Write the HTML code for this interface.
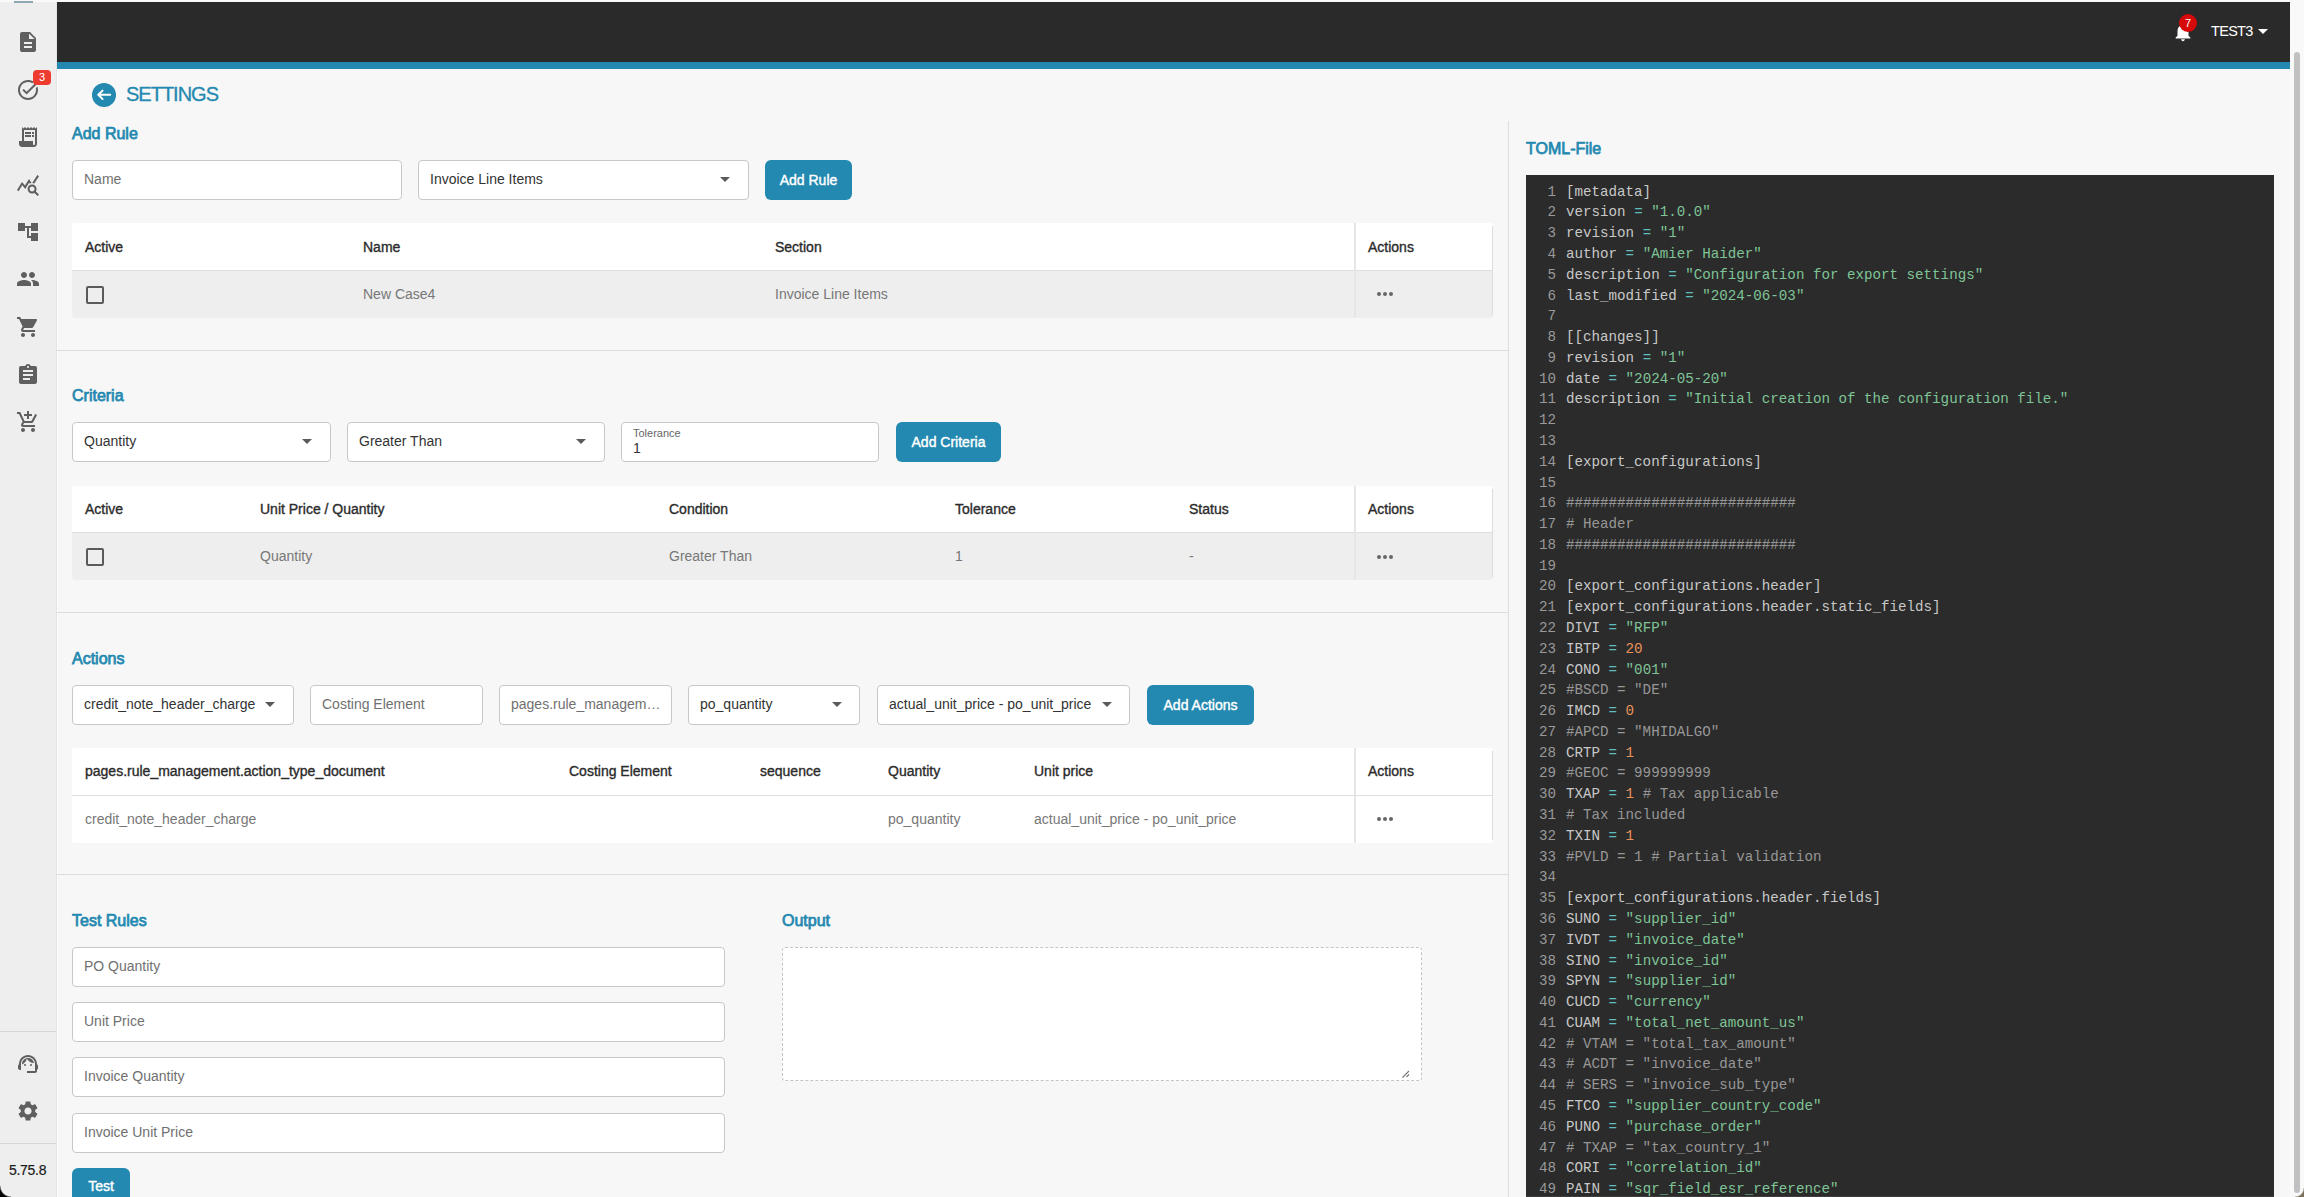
<!DOCTYPE html>
<html><head><meta charset="utf-8">
<style>
html,body{margin:0;padding:0}
body{width:2304px;height:1197px;overflow:hidden;position:relative;background:#f7f7f7;font-family:"Liberation Sans",sans-serif;font-size:14px;color:#333}
.a{position:absolute}
#sb{position:absolute;left:0;top:2px;width:56px;height:1195px;background:#eeeeee;border-right:1px solid #e4e4e4}
#sb svg{position:absolute;width:24px;height:24px;fill:#5f5f5f}
#hdr{position:absolute;left:57px;top:2px;width:2233px;height:60px;background:#2a2a2a}
#stripe{position:absolute;left:57px;top:62px;width:2233px;height:7px;background:#2389b0}
.ttl{position:absolute;font-size:16px;color:#2389b0;line-height:20px;white-space:nowrap;-webkit-text-stroke:0.75px #2389b0}
.inp{position:absolute;box-sizing:border-box;height:40px;background:#fff;border:1px solid #c8c8c8;border-radius:4px;line-height:37px;padding-left:11px;color:#333;white-space:nowrap;overflow:hidden}
.ph{color:#707070}
.car{position:absolute;width:0;height:0;border-left:5px solid transparent;border-right:5px solid transparent;border-top:5px solid #5a5a5a;top:16px}
.btn{position:absolute;box-sizing:border-box;height:40px;background:#2389b0;border-radius:6px;color:#fff;font-size:14px;-webkit-text-stroke:0.4px #fff;line-height:40px;text-align:center;white-space:nowrap}
.tbl{position:absolute;left:72px;width:1421px;background:#fff;border-radius:3px;overflow:hidden}
.th{position:absolute;top:0;font-size:14px;color:#2b2b2b;white-space:nowrap;-webkit-text-stroke:0.35px #2b2b2b}
.tr{position:absolute;left:0;width:100%;background:#eeeeee;border-top:1px solid #dedede}
.td{position:absolute;color:#777;white-space:nowrap}
.vd{position:absolute;left:1282px;top:0;width:2px;height:100%;background:#e6e6e6}
.rb{position:absolute;right:0;top:3px;width:1px;bottom:3px;background:#dcdcdc}
.cb{position:absolute;left:14px;box-sizing:border-box;width:18px;height:18px;border:2px solid #5a5a5a;border-radius:2px}
.dots{position:absolute;left:1304px;width:17px;height:5px}
.dots i{position:absolute;top:0.5px;width:4px;height:4px;border-radius:50%;background:#666}
.hl{position:absolute;left:57px;width:1451px;height:1px;background:#dddddd}
#code{position:absolute;left:1526px;top:175px;width:748px;height:1022px;background:#2b2b2b;overflow:hidden}
#ln,#src{position:absolute;margin:0;font-family:"Liberation Mono",monospace;font-size:14.2px;line-height:20.78px;white-space:pre}
#ln{left:0;width:30px;top:6.6px;text-align:right;color:#999}
#src{left:40px;top:6.6px;color:#c8c8c8}
#src .c{color:#979797}#src .s{color:#7fc497}#src .n{color:#e8925a}#src .o{color:#5fbdbd}
</style></head><body>

<div class="a" style="left:0;top:0;width:2304px;height:2px;background:#f9f9f9"></div>

<!-- SIDEBAR -->
<div id="sb">
<div class="a" style="left:14px;top:-1px;width:19px;height:2px;background:#8fa9b3"></div>
<svg style="left:16px;top:28px" viewBox="0 0 24 24"><path d="M14 2H6c-1.1 0-1.99.9-1.99 2L4 20c0 1.1.89 2 1.99 2H18c1.1 0 2-.9 2-2V8l-6-6zm2 16H8v-2h8v2zm0-4H8v-2h8v2zm-3-5V3.5L18.5 9H13z"/></svg>
<svg style="left:16px;top:76px" viewBox="0 0 24 24"><path d="M22,5.18L10.59,16.6l-4.24-4.24l1.41-1.41l2.83,2.83l10-10L22,5.18z M19.79,10.22C19.92,10.8,20,11.39,20,12c0,4.42-3.58,8-8,8s-8-3.58-8-8c0-4.42,3.58-8,8-8c1.58,0,3.04,0.46,4.28,1.25l1.44-1.44C16.1,2.67,14.13,2,12,2C6.48,2,2,6.48,2,12c0,5.52,4.48,10,10,10s10-4.48,10-10c0-1.19-0.22-2.33-0.6-3.39L19.79,10.22z"/></svg>
<div class="a" style="left:33px;top:68px;width:18px;height:15px;border-radius:4px;background:#ee3b30;color:#fff;font-size:11px;line-height:15px;text-align:center">3</div>
<svg style="left:16px;top:123px" viewBox="0 0 24 24"><path d="M19.5 3.5L18 2l-1.5 1.5L15 2l-1.5 1.5L12 2l-1.5 1.5L9 2 7.5 3.5 6 2v14H3v3c0 1.66 1.34 3 3 3h12c1.66 0 3-1.34 3-3V2l-1.5 1.5zM19 19c0 .55-.45 1-1 1s-1-.45-1-1v-3H8V5h11v14z"/><path d="M9 7h6v2H9zm7 0h2v2h-2zm-7 3h6v2H9zm7 0h2v2h-2z"/></svg>
<svg style="left:16px;top:171px" viewBox="0 0 24 24"><path d="M19.88,18.47c0.44-0.7,0.7-1.51,0.7-2.39c0-2.49-2.01-4.5-4.5-4.5s-4.5,2.01-4.5,4.5s2.01,4.5,4.49,4.5c0.88,0,1.7-0.26,2.39-0.7L21.58,23L23,21.58L19.88,18.47z M16.08,18.58c-1.38,0-2.5-1.12-2.5-2.5c0-1.38,1.12-2.5,2.5-2.5s2.5,1.12,2.5,2.5C18.58,17.46,17.46,18.58,16.08,18.58z M15.72,10.08c-0.74,0.02-1.45,0.18-2.1,0.45l-0.55-0.83l-3.8,6.18l-3.01-3.52l-3.63,5.81L1,17l5-8l3,3.5L13,6C13,6,15.72,10.08,15.72,10.08z M18.31,10.58c-0.64-0.28-1.33-0.45-2.05-0.49c0,0,5.12-8.09,5.12-8.09L23,3.18L18.31,10.58z"/></svg>
<svg style="left:16px;top:218px" viewBox="0 0 24 24"><path d="M22 11V3h-7v3H9V3H2v8h7V8h2v10h4v3h7v-8h-7v3h-2V8h2v3z"/></svg>
<svg style="left:16px;top:265px" viewBox="0 0 24 24"><path d="M16 11c1.66 0 2.99-1.34 2.99-3S17.66 5 16 5c-1.66 0-3 1.34-3 3s1.34 3 3 3zm-8 0c1.66 0 2.99-1.34 2.99-3S9.66 5 8 5C6.34 5 5 6.34 5 8s1.34 3 3 3zm0 2c-2.33 0-7 1.17-7 3.5V19h14v-2.5c0-2.33-4.67-3.5-7-3.5zm8 0c-.29 0-.62.02-.97.05 1.16.84 1.97 1.97 1.97 3.45V19h6v-2.5c0-2.33-4.67-3.5-7-3.5z"/></svg>
<svg style="left:16px;top:313px" viewBox="0 0 24 24"><path d="M7 18c-1.1 0-1.99.9-1.99 2S5.9 22 7 22s2-.9 2-2-.9-2-2-2zM1 2v2h2l3.6 7.59-1.35 2.45c-.16.28-.25.61-.25.96 0 1.1.9 2 2 2h12v-2H7.42c-.14 0-.25-.11-.25-.25l.03-.12.9-1.63h7.45c.75 0 1.41-.41 1.75-1.03l3.58-6.49c.08-.14.12-.31.12-.48 0-.55-.45-1-1-1H5.21l-.94-2H1zm16 16c-1.1 0-1.99.9-1.99 2s.89 2 1.99 2 2-.9 2-2-.9-2-2-2z"/></svg>
<svg style="left:16px;top:361px" viewBox="0 0 24 24"><path d="M19 3h-4.18C14.4 1.84 13.3 1 12 1c-1.3 0-2.4.84-2.82 2H5c-1.1 0-2 .9-2 2v14c0 1.1.9 2 2 2h14c1.1 0 2-.9 2-2V5c0-1.1-.9-2-2-2zm-7 0c.55 0 1 .45 1 1s-.45 1-1 1-1-.45-1-1 .45-1 1-1zm2 14H7v-2h7v2zm3-4H7v-2h10v2zm0-4H7V7h10v2z"/></svg>
<svg style="left:16px;top:408px" viewBox="0 0 24 24"><path d="M11 9h2V6h3V4h-3V1h-2v3H8v2h3v3zm-4 9c-1.1 0-1.99.9-1.99 2S5.9 22 7 22s2-.9 2-2-.9-2-2-2zm10 0c-1.1 0-1.99.9-1.99 2s.89 2 1.99 2 2-.9 2-2-.9-2-2-2zm-9.83-3.25l.03-.12.9-1.63h7.45c.75 0 1.41-.41 1.75-1.03L21 4.96 19.25 4h-.01l-1.1 2-2.76 5H8.53l-.13-.27L6.16 6l-.95-2-.94-2H1v2h2l3.6 7.59-1.35 2.45c-.16.28-.25.61-.25.96 0 1.1.9 2 2 2h12v-2H7.42c-.13 0-.25-.11-.25-.25z"/></svg>
<div class="a" style="left:0;top:1029px;width:56px;height:1px;background:#d6d6d6"></div>
<svg style="left:16px;top:1050px" viewBox="0 0 24 24"><path d="M21 12.22C21 6.73 16.74 3 12 3c-4.69 0-9 3.65-9 9.28-.6.34-1 .98-1 1.72v2c0 1.1.9 2 2 2h1v-6.1c0-3.87 3.13-7 7-7s7 3.13 7 7V19h-8v2h8c1.1 0 2-.9 2-2v-1.22c.59-.31 1-.92 1-1.64v-2.3c0-.7-.41-1.31-1-1.62z"/><circle cx="9" cy="13" r="1"/><circle cx="15" cy="13" r="1"/><path d="M18 11.03C17.52 8.18 15.04 6 12.05 6c-3.03 0-6.29 2.51-6.03 6.45 2.47-1.01 4.33-3.21 4.86-5.89 1.31 2.63 4 4.44 7.12 4.47z"/></svg>
<svg style="left:16px;top:1097px" viewBox="0 0 24 24"><path d="M19.14 12.94c.04-.3.06-.61.06-.94 0-.32-.02-.64-.07-.94l2.03-1.58c.18-.14.23-.41.12-.61l-1.92-3.32c-.12-.22-.37-.29-.59-.22l-2.39.96c-.5-.38-1.03-.7-1.62-.94l-.36-2.54c-.04-.24-.24-.41-.48-.41h-3.84c-.24 0-.43.17-.47.41l-.36 2.54c-.59.24-1.130.57-1.62.94l-2.39-.96c-.22-.08-.47 0-.59.22L2.74 8.870c-.12.21-.08.47.12.61l2.03 1.58c-.05.3-.09.63-.09.94s.02.64.07.94l-2.03 1.58c-.18.14-.23.41-.12.61l1.92 3.32c.12.22.37.29.59.22l2.39-.96c.5.38 1.03.7 1.62.94l.36 2.54c.05.24.24.41.48.41h3.84c.24 0 .44-.17.47-.41l.36-2.54c.59-.24 1.13-.56 1.62-.94l2.39.96c.22.08.47 0 .59-.22l1.92-3.32c.12-.22.07-.47-.12-.61l-2.010-1.58zM12 15.6c-1.98 0-3.6-1.62-3.6-3.6s1.62-3.6 3.6-3.6 3.6 1.62 3.6 3.6-1.62 3.6-3.6 3.6z"/></svg>
<div class="a" style="left:0;top:1141px;width:56px;height:1px;background:#d6d6d6"></div>
<div class="a" style="left:9px;top:1158.5px;font-size:14px;line-height:18px;color:#1a1a1a;letter-spacing:-0.3px;-webkit-text-stroke:0.2px #1a1a1a">5.75.8</div>
</div>

<!-- HEADER -->
<div class="a" style="left:57px;top:69px;width:1px;height:1128px;background:#fcfcfc"></div>
<div id="hdr">
<svg class="a" style="left:2115px;top:18.5px" width="22" height="22" viewBox="0 0 24 24"><path fill="#fff" d="M12 22c1.1 0 2-.9 2-2h-4c0 1.1.89 2 2 2zm6-6v-5c0-3.07-1.640-5.64-4.5-6.32V4c0-.83-.67-1.5-1.5-1.5s-1.5.67-1.5 1.5v.68C7.63 5.36 6 7.92 6 11v5l-2 2v1h16v-1l-2-2z"/></svg>
<div class="a" style="left:2122px;top:12px;width:18px;height:18px;border-radius:50%;background:#d60a0a;color:#fff;font-size:11px;line-height:18px;text-align:center">7</div>
<div class="a" style="left:2154px;top:19.9px;font-size:14.5px;line-height:18px;color:#fff;white-space:nowrap;letter-spacing:-0.7px">TEST3</div>
<div class="a" style="left:2201px;top:27px;width:0;height:0;border-left:5px solid transparent;border-right:5px solid transparent;border-top:5px solid #fff"></div>
</div>
<div id="stripe"></div>

<!-- MAIN -->

<!-- back + title -->
<svg class="a" style="left:92px;top:82.5px" width="24" height="24" viewBox="0 0 24 24"><circle cx="12" cy="12" r="12" fill="#2389b0"/><path d="M18.3 11.8H6.2M10.6 7.6L6.2 11.8L10.6 16" stroke="#fff" stroke-width="1.9" stroke-linecap="round" stroke-linejoin="round" fill="none"/></svg>
<div class="a" style="left:126px;top:82px;font-size:20px;line-height:24px;color:#2389b0;letter-spacing:-1px;white-space:nowrap;-webkit-text-stroke:0.3px #2389b0">SETTINGS</div>

<!-- ADD RULE -->
<div class="ttl" style="left:72px;top:123.5px">Add Rule</div>
<div class="inp ph" style="left:72px;top:160px;width:330px">Name</div>
<div class="inp" style="left:418px;top:160px;width:331px">Invoice Line Items</div>
<div class="car" style="left:720px;top:177px"></div>
<div class="btn" style="left:765px;top:160px;width:87px">Add Rule</div>

<div class="tbl" style="top:223px;height:95px">
  <div class="th" style="left:13px;top:16px">Active</div>
  <div class="th" style="left:291px;top:16px">Name</div>
  <div class="th" style="left:703px;top:16px">Section</div>
  <div class="th" style="left:1296px;top:16px">Actions</div>
  <div class="tr" style="top:47px;height:47px">
    <div class="cb" style="top:15px"></div>
    <div class="td" style="left:291px;top:15px">New Case4</div>
    <div class="td" style="left:703px;top:15px">Invoice Line Items</div>
    <div class="dots" style="top:20px"><i style="left:0.5px"></i><i style="left:6.5px"></i><i style="left:12.5px"></i></div>
  </div>
  <div class="vd"></div><div class="rb"></div>
</div>
<div class="hl" style="top:350px"></div>

<!-- CRITERIA -->
<div class="ttl" style="left:72px;top:385.5px">Criteria</div>
<div class="inp" style="left:72px;top:422px;width:259px">Quantity</div>
<div class="car" style="left:302px;top:439px"></div>
<div class="inp" style="left:347px;top:422px;width:258px">Greater Than</div>
<div class="car" style="left:576px;top:439px"></div>
<div class="inp" style="left:621px;top:422px;width:258px;line-height:normal">
  <div class="a" style="left:11px;top:4px;font-size:11px;color:#666">Tolerance</div>
  <div class="a" style="left:11px;top:17px;font-size:14px;color:#333">1</div>
</div>
<div class="btn" style="left:896px;top:422px;width:105px">Add Criteria</div>

<div class="tbl" style="top:486px;height:94px">
  <div class="th" style="left:13px;top:15px">Active</div>
  <div class="th" style="left:188px;top:15px">Unit Price / Quantity</div>
  <div class="th" style="left:597px;top:15px">Condition</div>
  <div class="th" style="left:883px;top:15px">Tolerance</div>
  <div class="th" style="left:1117px;top:15px">Status</div>
  <div class="th" style="left:1296px;top:15px">Actions</div>
  <div class="tr" style="top:46px;height:47px">
    <div class="cb" style="top:15px"></div>
    <div class="td" style="left:188px;top:15px">Quantity</div>
    <div class="td" style="left:597px;top:15px">Greater Than</div>
    <div class="td" style="left:883px;top:15px">1</div>
    <div class="td" style="left:1117px;top:15px">-</div>
    <div class="dots" style="top:21px"><i style="left:0.5px"></i><i style="left:6.5px"></i><i style="left:12.5px"></i></div>
  </div>
  <div class="vd"></div><div class="rb"></div>
</div>
<div class="hl" style="top:612px"></div>

<!-- ACTIONS -->
<div class="ttl" style="left:72px;top:648.5px">Actions</div>
<div class="inp" style="left:72px;top:685px;width:222px">credit_note_header_charge</div>
<div class="car" style="left:265px;top:702px"></div>
<div class="inp ph" style="left:310px;top:685px;width:173px">Costing Element</div>
<div class="inp ph" style="left:499px;top:685px;width:173px">pages.rule_managem…</div>
<div class="inp" style="left:688px;top:685px;width:172px">po_quantity</div>
<div class="car" style="left:832px;top:702px"></div>
<div class="inp" style="left:877px;top:685px;width:253px">actual_unit_price - po_unit_price</div>
<div class="car" style="left:1102px;top:702px"></div>
<div class="btn" style="left:1147px;top:685px;width:107px">Add Actions</div>

<div class="tbl" style="top:748px;height:95px">
  <div class="th" style="left:13px;top:15px">pages.rule_management.action_type_document</div>
  <div class="th" style="left:497px;top:15px">Costing Element</div>
  <div class="th" style="left:688px;top:15px">sequence</div>
  <div class="th" style="left:816px;top:15px">Quantity</div>
  <div class="th" style="left:962px;top:15px">Unit price</div>
  <div class="th" style="left:1296px;top:15px">Actions</div>
  <div class="tr" style="top:47px;height:47px;background:#fff">
    <div class="td" style="left:13px;top:15px">credit_note_header_charge</div>
    <div class="td" style="left:816px;top:15px">po_quantity</div>
    <div class="td" style="left:962px;top:15px">actual_unit_price - po_unit_price</div>
    <div class="dots" style="top:20px"><i style="left:0.5px"></i><i style="left:6.5px"></i><i style="left:12.5px"></i></div>
  </div>
  <div class="vd"></div><div class="rb"></div>
</div>
<div class="hl" style="top:874px"></div>

<!-- TEST RULES -->
<div class="ttl" style="left:72px;top:910.5px">Test Rules</div>
<div class="inp ph" style="left:72px;top:947px;width:653px">PO Quantity</div>
<div class="inp ph" style="left:72px;top:1002px;width:653px">Unit Price</div>
<div class="inp ph" style="left:72px;top:1057px;width:653px">Invoice Quantity</div>
<div class="inp ph" style="left:72px;top:1113px;width:653px">Invoice Unit Price</div>
<div class="btn" style="left:72px;top:1168px;width:58px;line-height:37px">Test</div>

<div class="ttl" style="left:782px;top:910.5px">Output</div>
<div class="a" style="left:782px;top:947px;width:640px;height:134px;box-sizing:border-box;background:#fff;border:1px dashed #c4c4c4;border-radius:3px"></div>


<!-- TOML -->
<div class="a" style="left:1508px;top:121px;width:1px;height:1076px;background:#dedede"></div>
<div class="ttl" style="left:1526px;top:138.5px">TOML-File</div>
<div id="code"><div class="a" style="left:0;top:1021px;width:748px;height:1px;background:#3d3d3d"></div>
<pre id="ln">1
2
3
4
5
6
7
8
9
10
11
12
13
14
15
16
17
18
19
20
21
22
23
24
25
26
27
28
29
30
31
32
33
34
35
36
37
38
39
40
41
42
43
44
45
46
47
48
49</pre>
<pre id="src">[metadata]
version <span class="o">=</span> <span class="s">&quot;1.0.0&quot;</span>
revision <span class="o">=</span> <span class="s">&quot;1&quot;</span>
author <span class="o">=</span> <span class="s">&quot;Amier Haider&quot;</span>
description <span class="o">=</span> <span class="s">&quot;Configuration for export settings&quot;</span>
last_modified <span class="o">=</span> <span class="s">&quot;2024-06-03&quot;</span>

[[changes]]
revision <span class="o">=</span> <span class="s">&quot;1&quot;</span>
date <span class="o">=</span> <span class="s">&quot;2024-05-20&quot;</span>
description <span class="o">=</span> <span class="s">&quot;Initial creation of the configuration file.&quot;</span>


[export_configurations]

<span class="c">###########################</span>
<span class="c"># Header</span>
<span class="c">###########################</span>

[export_configurations.header]
[export_configurations.header.static_fields]
DIVI <span class="o">=</span> <span class="s">&quot;RFP&quot;</span>
IBTP <span class="o">=</span> <span class="n">20</span>
CONO <span class="o">=</span> <span class="s">&quot;001&quot;</span>
<span class="c">#BSCD = &quot;DE&quot;</span>
IMCD <span class="o">=</span> <span class="n">0</span>
<span class="c">#APCD = &quot;MHIDALGO&quot;</span>
CRTP <span class="o">=</span> <span class="n">1</span>
<span class="c">#GEOC = 999999999</span>
TXAP <span class="o">=</span> <span class="n">1</span> <span class="c"># Tax applicable</span>
<span class="c"># Tax included</span>
TXIN <span class="o">=</span> <span class="n">1</span>
<span class="c">#PVLD = 1 # Partial validation</span>

[export_configurations.header.fields]
SUNO <span class="o">=</span> <span class="s">&quot;supplier_id&quot;</span>
IVDT <span class="o">=</span> <span class="s">&quot;invoice_date&quot;</span>
SINO <span class="o">=</span> <span class="s">&quot;invoice_id&quot;</span>
SPYN <span class="o">=</span> <span class="s">&quot;supplier_id&quot;</span>
CUCD <span class="o">=</span> <span class="s">&quot;currency&quot;</span>
CUAM <span class="o">=</span> <span class="s">&quot;total_net_amount_us&quot;</span>
<span class="c"># VTAM = &quot;total_tax_amount&quot;</span>
<span class="c"># ACDT = &quot;invoice_date&quot;</span>
<span class="c"># SERS = &quot;invoice_sub_type&quot;</span>
FTCO <span class="o">=</span> <span class="s">&quot;supplier_country_code&quot;</span>
PUNO <span class="o">=</span> <span class="s">&quot;purchase_order&quot;</span>
<span class="c"># TXAP = &quot;tax_country_1&quot;</span>
CORI <span class="o">=</span> <span class="s">&quot;correlation_id&quot;</span>
PAIN <span class="o">=</span> <span class="s">&quot;sqr_field_esr_reference&quot;</span></pre>
</div>

<!-- SCROLLBAR -->
<div class="a" style="left:2290px;top:0;width:14px;height:1197px;background:#f9f9f9"></div>
<div class="a" style="left:2294px;top:52px;width:6px;height:1141px;background:#c1c1c1;border-radius:3px"></div>

<!-- output resize handle -->
<svg class="a" style="left:1401px;top:1069px" width="10" height="10" viewBox="0 0 10 10"><path d="M8 2L1.5 8.5M8 5.5L5.5 8" stroke="#777" stroke-width="1.1" fill="none"/></svg>
<!-- window corners -->
<div class="a" style="left:0;top:1186px;width:11px;height:11px;background:radial-gradient(circle at 11px 0,rgba(0,0,0,0) 10px,#000 11.5px)"></div>
<div class="a" style="left:2295px;top:1188px;width:9px;height:9px;background:radial-gradient(circle at 0 0,rgba(0,0,0,0) 8px,#7a705c 9.5px)"></div>
</body></html>
